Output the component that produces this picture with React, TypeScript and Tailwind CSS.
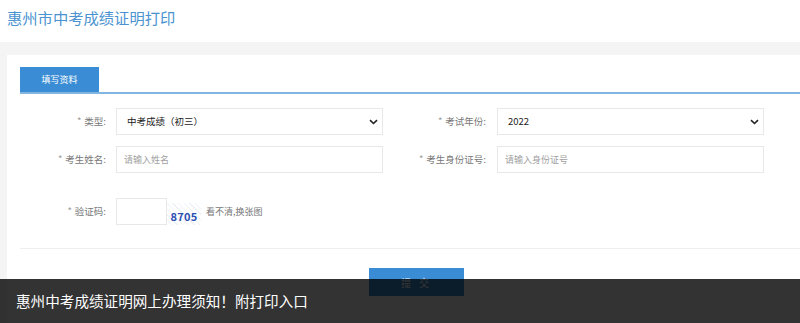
import React from "react";

const font = { fontFamily: '"Noto Sans CJK SC", "Noto Sans", sans-serif' };

function Chevron() {
  return (
    <svg width="9" height="6" viewBox="0 0 9 6" className="shrink-0">
      <path d="M1 1.2 L4.5 4.5 L8 1.2" fill="none" stroke="#222" strokeWidth="1.6" />
    </svg>
  );
}

function Label({ children }: { children: React.ReactNode }) {
  return (
    <div className="w-[88px] shrink-0 text-right text-[9.5px] text-[#777] pr-[2px]">
      <span className="text-[#999] mr-[3px]">*</span>
      {children}
    </div>
  );
}

function Select({ value }: { value: string }) {
  return (
    <div className="w-[267px] h-[27px] border border-[#e8e8e8] flex items-center justify-between pl-[10px] pr-[4px] text-[9.5px] text-[#222]">
      <span>{value}</span>
      <Chevron />
    </div>
  );
}

function Input({ placeholder }: { placeholder: string }) {
  return (
    <div className="w-[267px] h-[27px] border border-[#e8e8e8] flex items-center pl-[7px] text-[9px] text-[#a0a0a0]">
      {placeholder}
    </div>
  );
}

export default function App() {
  return (
    <div className="w-[800px] h-[323px] relative overflow-hidden bg-white" style={font}>
      <div className="h-[42px] pl-[7px] pt-[6px] text-[15.3px] text-[#4a93d0] leading-[22px]">
        惠州市中考成绩证明打印
      </div>
      <div className="bg-[#f4f4f4] pt-[13px] pl-[7px] h-[281px]">
        <div className="bg-white h-full pl-[13px] pt-[12px]">
          <div className="border-b-2 border-[#82b5e2] h-[27px] flex">
            <div className="w-[79px] h-[25px] bg-[#3a8dd5] text-white text-[9px] flex items-center justify-center">
              填写资料
            </div>
          </div>
          <div className="pt-[14px] flex flex-col">
            <div className="flex gap-[17px] items-center">
              <div className="flex items-center gap-[8px]">
                <Label>类型:</Label>
                <Select value="中考成绩（初三）" />
              </div>
              <div className="flex items-center gap-[9px]">
                <Label>考试年份:</Label>
                <Select value="2022" />
              </div>
            </div>
            <div className="flex gap-[17px] items-center mt-[11px]">
              <div className="flex items-center gap-[8px]">
                <Label>考生姓名:</Label>
                <Input placeholder="请输入姓名" />
              </div>
              <div className="flex items-center gap-[9px]">
                <Label>考生身份证号:</Label>
                <Input placeholder="请输入身份证号" />
              </div>
            </div>
            <div className="flex items-center gap-[8px] mt-[25px]">
              <div className="w-[86px] shrink-0 text-right text-[9.5px] text-[#777]">
                <span className="text-[#999] mr-[3px]">*</span>验证码:
              </div>
              <div className="flex items-center ml-[2px]">
                <div className="w-[51px] h-[27px] border border-[#e8e8e8]" />
                <div className="w-[34px] h-[22px] mt-[4px] flex items-end justify-center text-[11px] font-bold text-[#2d4fb0] leading-none pb-[3px] tracking-[0.3px] bg-[repeating-linear-gradient(45deg,#fff_0px,#fff_3px,#eef2f8_3px,#eef2f8_4px)]">
                  8705
                </div>
                <span className="ml-[5px] text-[9px] text-[#777]">看不清,换张图</span>
              </div>
            </div>
            <div className="h-px bg-[#efefef] mt-[23px]" />
            <div className="mt-[19px] pl-[349px]">
              <div className="w-[95px] h-[28px] bg-[#3a8dd5] text-white text-[10px] flex items-center justify-center tracking-[3px]">
                提 交
              </div>
            </div>
          </div>
        </div>
      </div>
      <div className="absolute left-0 right-0 bottom-0 h-[44px] bg-black/80 flex items-center pl-[16px] text-white text-[14.6px]">
        惠州中考成绩证明网上办理须知！附打印入口
      </div>
    </div>
  );
}
